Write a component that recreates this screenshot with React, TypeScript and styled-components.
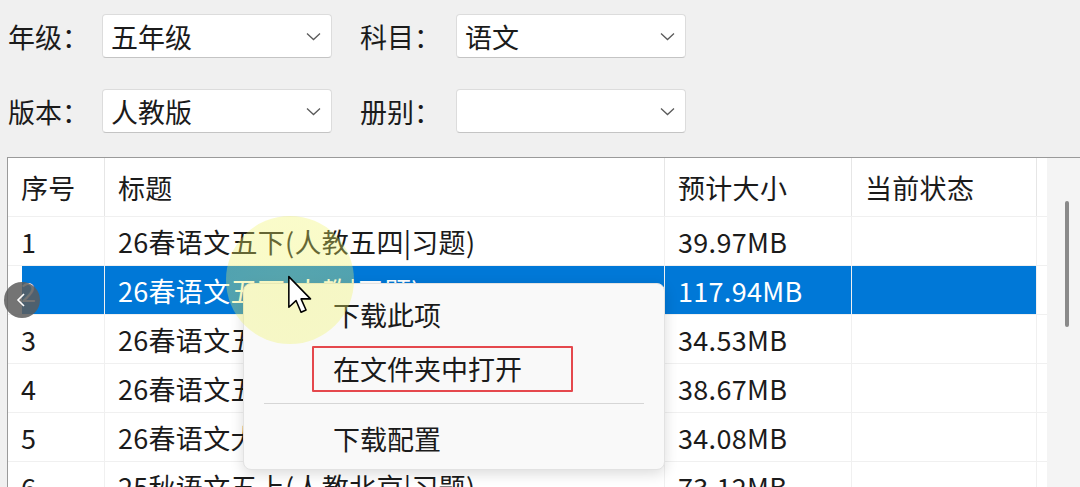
import React from "react";
import styled, { createGlobalStyle } from "styled-components";

const GlobalStyle = createGlobalStyle`
  html, body {
    margin: 0;
    padding: 0;
    background: #f0f0f0;
  }
  * {
    box-sizing: border-box;
  }
`;

const FONT = `"Noto Sans CJK SC", "Noto Sans", sans-serif`;

const Screen = styled.div`
  position: relative;
  width: 1080px;
  height: 487px;
  overflow: hidden;
  background: #f0f0f0;
  font-family: ${FONT};
  font-size: 27px;
  color: #1b1b1b;
`;

const FilterForm = styled.div`
  display: flex;
  flex-direction: column;
  gap: 31px;
  padding: 14px 0 0 8px;
`;

const FilterRow = styled.div`
  display: flex;
  align-items: center;
  height: 44px;
`;

const FieldLabel = styled.span<{ $spaced?: boolean }>`
  width: ${({ $spaced }) => ($spaced ? "96px" : "94px")};
  margin-left: ${({ $spaced }) => ($spaced ? "28px" : "0")};
  white-space: nowrap;
`;

const Combo = styled.div`
  display: flex;
  align-items: center;
  justify-content: space-between;
  width: 230px;
  height: 44px;
  padding: 0 10px 0 8px;
  background: #ffffff;
  border: 1px solid #dcdcdc;
  border-bottom-color: #c4c4c4;
  border-radius: 4px;
`;

const ComboText = styled.span`
  white-space: nowrap;
`;

const ListFrame = styled.div`
  display: flex;
  margin: 24px 0 0 7px;
  width: 1090px;
  height: 340px;
  border-top: 1px solid #9a9a9a;
  border-left: 1px solid #9a9a9a;
`;

const ListBody = styled.div`
  width: 1039px;
  background: #ffffff;
  display: flex;
  flex-direction: column;
`;

const GridRow = styled.div<{ $header?: boolean }>`
  display: grid;
  grid-template-columns: 97px 560px 187px 185px 10px;
  height: ${({ $header }) => ($header ? "59px" : "49px")};
  border-bottom: 1px solid #f0f0f0;
  flex-shrink: 0;
`;

const Cell = styled.div<{ $header?: boolean; $selected?: boolean; $first?: boolean }>`
  display: flex;
  align-items: center;
  padding-left: 13px;
  white-space: nowrap;
  overflow: hidden;
  letter-spacing: 0.3px;
  border-right: 1px solid ${({ $header }) => ($header ? "#e6e6e6" : "#f0f0f0")};
  color: ${({ $selected }) => ($selected ? "#ffffff" : "#1b1b1b")};
  background: ${({ $selected, $first }) =>
    !$selected
      ? "transparent"
      : $first
      ? "linear-gradient(to right, transparent 14px, #0078d7 14px)"
      : "#0078d7"};
`;

const Filler = styled.div`
  background: transparent;
`;

const ScrollTrack = styled.div`
  flex: 1;
  background: #f4f4f4;
  padding: 43px 0 0 18px;
`;

const ScrollThumb = styled.div`
  width: 4px;
  height: 126px;
  border-radius: 2px;
  background: #8a8a8a;
`;

const CursorHalo = styled.div`
  position: absolute;
  left: 226px;
  top: 216px;
  width: 128px;
  height: 128px;
  border-radius: 50%;
  background: radial-gradient(
    circle,
    rgba(240, 244, 100, 0.36) 0%,
    rgba(240, 244, 100, 0.34) 72%,
    rgba(240, 244, 100, 0) 100%
  );
  pointer-events: none;
`;

const ContextMenu = styled.div`
  position: absolute;
  left: 243px;
  top: 283px;
  width: 422px;
  padding: 3px 0 4px;
  background: #f9f9f9;
  border: 1px solid #e2e2e2;
  border-radius: 8px;
  box-shadow: 0 4px 14px rgba(0, 0, 0, 0.14);
  display: flex;
  flex-direction: column;
`;

const MenuItem = styled.div`
  position: relative;
  display: flex;
  align-items: center;
  height: 54px;
  padding-left: 89px;
  white-space: nowrap;
`;

const MenuSeparator = styled.div`
  height: 16px;
  display: flex;
  align-items: center;
  padding: 0 20px;

  &::after {
    content: "";
    flex: 1;
    height: 1px;
    background: #d6d6d6;
  }
`;

const Annotation = styled.div`
  position: absolute;
  left: 68px;
  top: 5px;
  width: 261px;
  height: 46px;
  border: 2px solid #e5484d;
  border-radius: 1px;
`;

const CursorArrow = styled.svg`
  position: absolute;
  left: 287px;
  top: 275px;
`;

const NavButton = styled.div`
  position: absolute;
  left: 4px;
  top: 282px;
  width: 36px;
  height: 36px;
  border-radius: 50%;
  background: rgba(92, 92, 92, 0.85);
  display: flex;
  align-items: center;
  justify-content: center;
`;

const Chevron = () => (
  <svg width="15" height="9" viewBox="0 0 15 9">
    <polyline
      points="1,1.5 7.5,7.5 14,1.5"
      fill="none"
      stroke="#5a5a5a"
      strokeWidth="1.3"
    />
  </svg>
);

type Item = { id: number; title: string; size: string };

const items: Item[] = [
  { id: 1, title: "26春语文五下(人教五四|习题)", size: "39.97MB" },
  { id: 2, title: "26春语文五下(人教|习题)", size: "117.94MB" },
  { id: 3, title: "26春语文五下(人教|试卷)", size: "34.53MB" },
  { id: 4, title: "26春语文五下(人教|课件)", size: "38.67MB" },
  { id: 5, title: "26春语文大单元(人教|习题)", size: "34.08MB" },
  { id: 6, title: "25秋语文五上(人教北京|习题)", size: "73.12MB" },
];

const SELECTED = 2;

const App: React.FC = () => {
  return (
    <>
      <GlobalStyle />
      <Screen>
        <FilterForm>
          <FilterRow>
            <FieldLabel>年级：</FieldLabel>
            <Combo>
              <ComboText>五年级</ComboText>
              <Chevron />
            </Combo>
            <FieldLabel $spaced>科目：</FieldLabel>
            <Combo>
              <ComboText>语文</ComboText>
              <Chevron />
            </Combo>
          </FilterRow>
          <FilterRow>
            <FieldLabel>版本：</FieldLabel>
            <Combo>
              <ComboText>人教版</ComboText>
              <Chevron />
            </Combo>
            <FieldLabel $spaced>册别：</FieldLabel>
            <Combo>
              <ComboText />
              <Chevron />
            </Combo>
          </FilterRow>
        </FilterForm>

        <ListFrame>
          <ListBody>
            <GridRow $header>
              <Cell $header>序号</Cell>
              <Cell $header>标题</Cell>
              <Cell $header>预计大小</Cell>
              <Cell $header>当前状态</Cell>
              <Filler />
            </GridRow>
            {items.map((item) => {
              const sel = item.id === SELECTED;
              return (
                <GridRow key={item.id}>
                  <Cell $selected={sel} $first>
                    {item.id}
                  </Cell>
                  <Cell $selected={sel}>{item.title}</Cell>
                  <Cell $selected={sel}>{item.size}</Cell>
                  <Cell $selected={sel} />
                  <Filler />
                </GridRow>
              );
            })}
          </ListBody>
          <ScrollTrack>
            <ScrollThumb />
          </ScrollTrack>
        </ListFrame>

        <ContextMenu>
          <MenuItem>下载此项</MenuItem>
          <MenuItem>
            在文件夹中打开
            <Annotation />
          </MenuItem>
          <MenuSeparator />
          <MenuItem>下载配置</MenuItem>
        </ContextMenu>

        <CursorHalo />

        <CursorArrow width="27" height="40" viewBox="0 0 24 36">
          <path
            d="M1.5 1.5 L1.5 29 L8 23 L12.5 33.5 L17 31.5 L12.5 21.5 L21 21.5 Z"
            fill="#ffffff"
            stroke="#000000"
            strokeWidth="1.4"
            strokeLinejoin="round"
          />
        </CursorArrow>

        <NavButton>
          <svg width="14" height="16" viewBox="0 0 14 16">
            <polyline
              points="9,2 3,8 9,14"
              fill="none"
              stroke="#ffffff"
              strokeWidth="1.6"
            />
          </svg>
        </NavButton>
      </Screen>
    </>
  );
};

export default App;
